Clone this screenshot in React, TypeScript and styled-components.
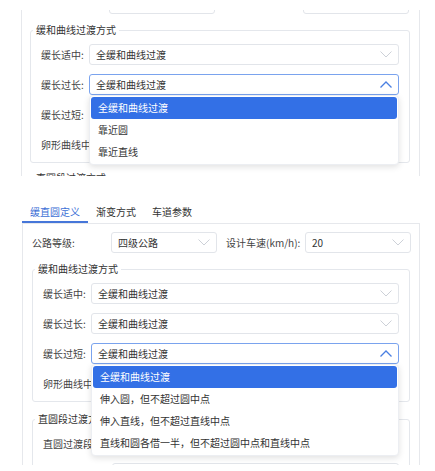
import React from "react";
import styled, { createGlobalStyle } from "styled-components";

const GlobalStyle = createGlobalStyle`
  html, body {
    margin: 0;
    background: #fff;
  }
  body {
    font-family: "Noto Sans CJK SC", "Microsoft YaHei", "Noto Sans", sans-serif;
    font-size: 10px;
    color: #333;
  }
`;

type SelectProps = {
  value?: string;
  open?: boolean;
  bare?: boolean;
  options?: string[];
};

const Chevron: React.FC<{ up?: boolean }> = ({ up }) => (
  <svg width="12" height="7" viewBox="0 0 12 7">
    <polyline
      points={up ? "0.5,6.5 6,1 11.5,6.5" : "0.5,0.5 6,6 11.5,0.5"}
      fill="none"
      stroke={up ? "#4a7fe2" : "#cdd1d8"}
      strokeWidth={up ? 1.3 : 1}
    />
  </svg>
);

// bare: only the box is seen (the top of the first shot is cut)
const Select: React.FC<SelectProps> = ({ value, open, bare, options }) => (
  <SelectBox $open={open}>
    {!bare && (
      <>
        <Value>{value}</Value>
        <Chevron up={open} />
      </>
    )}
    {open && options && (
      <Menu>
        {options.map((o, i) => (
          <MenuItem key={o} $active={i === 0}>
            {o}
          </MenuItem>
        ))}
      </Menu>
    )}
  </SelectBox>
);

const CURVE = "全缓和曲线过渡";

const App: React.FC = () => {
  return (
    <Page>
      <GlobalStyle />
      <ShotClip $top={10} $height={166}>
        <Panel $ml={21} $mt={-26} $pl={8}>
          <TopRow>
            <Label />
            <Select bare />
            <Label $pad />
            <Select bare />
          </TopRow>
          <Fieldset $mt={9}>
            <Legend>缓和曲线过渡方式</Legend>
            <FieldBody>
              <Row $label={48}>
                <Label>缓长适中:</Label>
                <Select value={CURVE} />
              </Row>
              <Row $label={48}>
                <Label>缓长过长:</Label>
                <Select value={CURVE} open options={[CURVE, "靠近圆", "靠近直线"]} />
              </Row>
              <Row $label={48}>
                <Label>缓长过短:</Label>
                <Select value={CURVE} />
              </Row>
              <Row $label={48}>
                <Label>卵形曲线中</Label>
                <Select value={CURVE} />
              </Row>
            </FieldBody>
          </Fieldset>
          <Fieldset $mt={8}>
            <Legend>直圆段过渡方式</Legend>
            <FieldBody>
              <Row $label={69}>
                <Label>直圆过渡段</Label>
                <Select value={CURVE} />
              </Row>
            </FieldBody>
          </Fieldset>
        </Panel>
      </ShotClip>

      <ShotClip $top={0} $height={289}>
        <Tabs>
          <Tab $active>缓直圆定义</Tab>
          <Tab>渐变方式</Tab>
          <Tab>车道参数</Tab>
        </Tabs>
        <Panel $ml={22} $mt={0} $pl={9}>
          <TopRow>
            <Label>公路等级:</Label>
            <Select value="四级公路" />
            <Label $pad>设计车速(km/h):</Label>
            <Select value="20" />
          </TopRow>
          <Fieldset $mt={9}>
            <Legend>缓和曲线过渡方式</Legend>
            <FieldBody>
              <Row $label={48}>
                <Label>缓长适中:</Label>
                <Select value={CURVE} />
              </Row>
              <Row $label={48}>
                <Label>缓长过长:</Label>
                <Select value={CURVE} />
              </Row>
              <Row $label={48}>
                <Label>缓长过短:</Label>
                <Select
                  value={CURVE}
                  open
                  options={[
                    CURVE,
                    "伸入圆，但不超过圆中点",
                    "伸入直线，但不超过直线中点",
                    "直线和圆各借一半，但不超过圆中点和直线中点",
                  ]}
                />
              </Row>
              <Row $label={48}>
                <Label>卵形曲线中</Label>
                <Select value={CURVE} />
              </Row>
            </FieldBody>
          </Fieldset>
          <Fieldset $mt={10}>
            <Legend>直圆段过渡方式</Legend>
            <FieldBody>
              <Row $label={69}>
                <Label>直圆过渡段长度:</Label>
                <Select value={CURVE} />
              </Row>
              <Row $label={69}>
                <Label>圆直过渡段长度:</Label>
                <Select value={CURVE} />
              </Row>
            </FieldBody>
          </Fieldset>
        </Panel>
      </ShotClip>
    </Page>
  );
};

export default App;

const Page = styled.div`
  width: 435px;
  height: 471px;
  overflow: hidden;
  background: #fff;
`;

const ShotClip = styled.div<{ $top: number; $height: number }>`
  margin-top: ${(p) => p.$top}px;
  height: ${(p) => p.$height}px;
  overflow: hidden;
`;

const Tabs = styled.div`
  display: flex;
  margin: 27px 0 0 22px;
`;

const Tab = styled.div<{ $active?: boolean }>`
  padding: 0 8px;
  height: 18px;
  line-height: 18px;
  font-size: 10px;
  color: ${(p) => (p.$active ? "#3c6fd6" : "#333")};
  border-bottom: 2px solid ${(p) => (p.$active ? "#4676d9" : "transparent")};
`;

const Panel = styled.div<{ $ml: number; $mt: number; $pl: number }>`
  box-sizing: border-box;
  width: ${(p) => 420 - p.$ml}px;
  margin: ${(p) => p.$mt}px 0 0 ${(p) => p.$ml}px;
  border: 1px solid #e6e8ec;
  padding: 8px 9px 40px ${(p) => p.$pl}px;
`;

const TopRow = styled.div`
  display: grid;
  grid-template-columns: 79px 106px 88px 106px;
  align-items: center;
`;

const Label = styled.div<{ $pad?: boolean }>`
  color: #444;
  white-space: nowrap;
  padding-left: ${(p) => (p.$pad ? "9px" : "0")};
  line-height: 14px;
`;

const Fieldset = styled.fieldset<{ $mt: number }>`
  margin: ${(p) => p.$mt}px 0 0;
  padding: 0;
  border: 1px solid #e4e7ec;
  border-radius: 3px;
  min-width: 0;
`;

const Legend = styled.legend`
  margin-left: 2px;
  padding: 0 3px;
  line-height: 14px;
  font-size: 10px;
  color: #333;
`;

const FieldBody = styled.div`
  display: flex;
  flex-direction: column;
  gap: 9px;
  padding: 7px 10px 7px 10px;
`;

const Row = styled.div<{ $label: number }>`
  display: grid;
  grid-template-columns: ${(p) => p.$label}px 1fr;
  align-items: center;
`;

const SelectBox = styled.div<{ $open?: boolean }>`
  position: relative;
  z-index: ${(p) => (p.$open ? 5 : "auto")};
  box-sizing: border-box;
  height: 21px;
  display: flex;
  align-items: center;
  padding: 0 6px 0 6px;
  background: #fff;
  border: 1px solid ${(p) => (p.$open ? "#7aa3ee" : "#e2e5ea")};
  border-radius: 3px;
`;

const Value = styled.span`
  flex: 1;
  color: #333;
  white-space: nowrap;
  overflow: hidden;
`;

const Menu = styled.div`
  position: absolute;
  left: -1px;
  right: -1px;
  top: calc(100% + 1px);
  padding: 1px;
  background: #fff;
  border: 1px solid #eceef2;
  border-radius: 4px;
  box-shadow: 0 2px 6px rgba(0, 0, 0, 0.12);
`;

const MenuItem = styled.div<{ $active?: boolean }>`
  height: 22px;
  line-height: 22px;
  padding: 0 7px;
  border-radius: 3px;
  white-space: nowrap;
  color: ${(p) => (p.$active ? "#fff" : "#333")};
  background: ${(p) => (p.$active ? "#3370e6" : "transparent")};
`;
